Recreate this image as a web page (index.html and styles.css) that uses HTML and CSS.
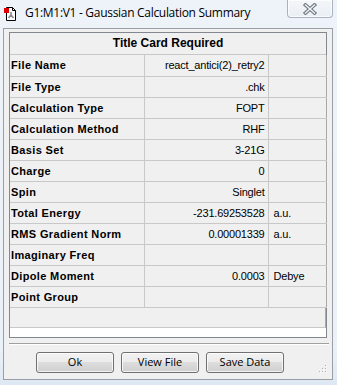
FILE: index.html
```html
<!DOCTYPE html>
<html>
<head>
<meta charset="utf-8">
<link rel="stylesheet" href="styles.css">
</head>
<body>
<div class="window">
  <div class="titlebar">
    <svg class="app-icon" width="12" height="15" viewBox="0 0 12 15">
      <path d="M2.5 1.5 H8.5 L11.5 4.5 V14.5 H2.5 Z" fill="#fff" stroke="#000" stroke-width="1"/>
      <path d="M8.5 1.5 V4.5 H11.5" fill="none" stroke="#000" stroke-width="1"/>
      <path d="M7 6 V9 M7 9 L4.5 12 M7 9 L9.5 12" stroke="#8a8a8a" stroke-width="1.6" fill="none"/>
      <rect x="0" y="2" width="5" height="5" fill="#e00000"/>
    </svg>
    <span class="title">G1:M1:V1 - Gaussian Calculation Summary</span>
    <div class="close-btn">
      <svg width="14" height="12" viewBox="0 0 14 12">
        <path d="M2.5 2 L11.5 10 M11.5 2 L2.5 10" stroke="#6e7680" stroke-width="3.6" stroke-linecap="square" fill="none"/>
        <path d="M2.5 2 L11.5 10 M11.5 2 L2.5 10" stroke="#eef2f6" stroke-width="1.5" stroke-linecap="square" fill="none"/>
      </svg>
    </div>
  </div>
  <div class="client">
    <div class="grid">
      <div class="grid-head">Title Card Required</div>
      <table class="summary">
        <tr><td class="lbl">File Name</td><td class="val">react_antici(2)_retry2</td><td class="unit"></td></tr>
        <tr><td class="lbl">File Type</td><td class="val">.chk</td><td class="unit"></td></tr>
        <tr><td class="lbl">Calculation Type</td><td class="val">FOPT</td><td class="unit"></td></tr>
        <tr><td class="lbl">Calculation Method</td><td class="val">RHF</td><td class="unit"></td></tr>
        <tr><td class="lbl">Basis Set</td><td class="val">3-21G</td><td class="unit"></td></tr>
        <tr><td class="lbl">Charge</td><td class="val">0</td><td class="unit"></td></tr>
        <tr><td class="lbl">Spin</td><td class="val">Singlet</td><td class="unit"></td></tr>
        <tr><td class="lbl">Total Energy</td><td class="val">-231.69253528</td><td class="unit">a.u.</td></tr>
        <tr><td class="lbl">RMS Gradient Norm</td><td class="val">0.00001339</td><td class="unit">a.u.</td></tr>
        <tr><td class="lbl">Imaginary Freq</td><td class="val"></td><td class="unit"></td></tr>
        <tr><td class="lbl">Dipole Moment</td><td class="val">0.0003</td><td class="unit">Debye</td></tr>
        <tr><td class="lbl">Point Group</td><td class="val"></td><td class="unit"></td></tr>
      </table>
      <div class="grid-blank-row"></div>
      <div class="grid-empty"></div>
    </div>
    <div class="separator"></div>
    <div class="buttons">
      <button class="btn">Ok</button>
      <button class="btn">View File</button>
      <button class="btn">Save Data</button>
    </div>
    <svg class="grip" width="8" height="8" viewBox="0 0 8 8">
      <rect x="6" y="0" width="1" height="1" fill="#b0b0b0"/>
      <rect x="3" y="3" width="1" height="1" fill="#b0b0b0"/>
      <rect x="6" y="3" width="1" height="1" fill="#b0b0b0"/>
      <rect x="0" y="6" width="1" height="1" fill="#b0b0b0"/>
      <rect x="3" y="6" width="1" height="1" fill="#b0b0b0"/>
      <rect x="6" y="6" width="1" height="1" fill="#b0b0b0"/>
      <rect x="7" y="1" width="1" height="1" fill="#fff"/>
      <rect x="4" y="4" width="1" height="1" fill="#fff"/>
      <rect x="7" y="4" width="1" height="1" fill="#fff"/>
      <rect x="1" y="7" width="1" height="1" fill="#fff"/>
      <rect x="4" y="7" width="1" height="1" fill="#fff"/>
      <rect x="7" y="7" width="1" height="1" fill="#fff"/>
    </svg>
  </div>
</div>
</body>
</html>
```

FILE: styles.css
```css
* { box-sizing: border-box; }

html, body {
  margin: 0;
  padding: 0;
}

body {
  width: 337px;
  height: 385px;
  overflow: hidden;
  background: linear-gradient(180deg, #eef3f9 0%, #ebf1f8 90%, #dde8f4 100%);
  font-family: "Liberation Sans", Arial, sans-serif;
}

.window {
  width: 337px;
  height: 385px;
  padding: 0 4px 0 3px;
}

.titlebar {
  display: flex;
  align-items: flex-start;
  height: 28px;
}

.app-icon {
  margin-top: 6px;
  margin-left: 1px;
  flex: none;
}

.title {
  margin-left: 9px;
  margin-top: 5px;
  font-family: "Open Sans", "Noto Sans", sans-serif;
  font-size: 12px;
  line-height: 16px;
  color: #000;
  white-space: nowrap;
  letter-spacing: -0.3px;
}

.close-btn {
  margin-left: auto;
  width: 46px;
  height: 18px;
  border: 1px solid #a9b2be;
  border-top: none;
  border-radius: 0 0 4px 4px;
  background: linear-gradient(180deg, #f3f6f9 0%, #eaeff5 100%);
  box-shadow: inset 0 0 0 1px rgba(255,255,255,0.7);
  display: flex;
  justify-content: center;
  padding-top: 3px;
}

.client {
  position: relative;
  width: 330px;
  height: 352px;
  border: 1px solid #9a9fa6;
  background: #f0f0f0;
  padding: 3px 0 0 5px;
}

.grid {
  width: 318px;
  height: 306px;
  border: 1px solid #828790;
  background: #fff;
  display: flex;
  flex-direction: column;
}

.grid-head {
  height: 22px;
  background: #f0f0f0;
  border-bottom: 1px solid #c8c8c8;
  text-align: center;
  font-weight: bold;
  font-size: 12px;
  line-height: 21px;
  color: #000;
}

.summary {
  border-collapse: collapse;
  table-layout: fixed;
  width: 316px;
  background: #f0f0f0;
}

.summary td {
  height: 21px;
  padding: 0;
  border-bottom: 1px solid #c8c8c8;
  border-right: 1px solid #c8c8c8;
  font-size: 11px;
  line-height: 20px;
  color: #000;
  white-space: nowrap;
  overflow: hidden;
  vertical-align: top;
}

.summary td.lbl {
  width: 134px;
  font-weight: bold;
  padding-left: 1px;
  letter-spacing: 0.35px;
}

.summary td.val {
  width: 124px;
  text-align: right;
  padding-right: 3px;
  letter-spacing: -0.2px;
}

.summary td.unit {
  width: 58px;
  padding-left: 5px;
  letter-spacing: -0.2px;
  border-right: 1px solid #a8a8a8;
}

.grid-blank-row {
  height: 20px;
  background: #f0f0f0;
  border-bottom: 1px solid #c8c8c8;
  border-right: 1px solid #a8a8a8;
}

.grid-empty {
  flex: 1;
  background: #fff;
}

.separator {
  width: 320px;
  margin-top: 5px;
  height: 2px;
  border-top: 1px solid #a0a0a0;
  border-bottom: 1px solid #ffffff;
}

.buttons {
  display: flex;
  gap: 7px;
  margin-top: 7px;
  margin-left: 27px;
}

.btn {
  width: 78px;
  height: 21px;
  padding: 0 0 1px;
  margin: 0;
  border: 1px solid #707070;
  border-radius: 3px;
  background: linear-gradient(180deg, #f2f2f2 0%, #ebebeb 49%, #dddddd 50%, #cfcfcf 100%);
  box-shadow: inset 0 0 0 1px rgba(255,255,255,0.75);
  font-family: "Open Sans", "Noto Sans", sans-serif;
  font-size: 11px;
  line-height: 18px;
  color: #000;
}

.grip {
  position: absolute;
  right: 5px;
  bottom: 6px;
}
```
